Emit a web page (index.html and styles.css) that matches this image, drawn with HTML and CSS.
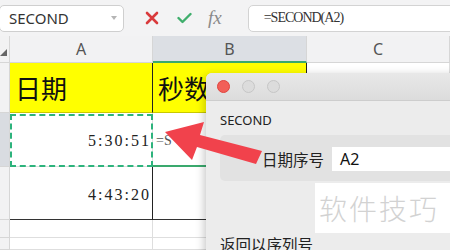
FILE: index.html
```html
<!DOCTYPE html>
<html lang="zh-CN">
<head>
  <meta charset="UTF-8" />
  <title>SECOND</title>
  <link rel="stylesheet" href="styles.css">
</head>
<body>
  <div class="app">
    <div class="toolbar">
      <div class="namebox">
        <span>SECOND</span>
        <span class="caret"></span>
      </div>
      <svg class="tool-icon" width="14" height="14" viewBox="0 0 14 14">
        <path d="M2 2 L12 12 M12 2 L2 12" stroke="#d93a3c" stroke-width="2.6" stroke-linecap="round"/>
      </svg>
      <svg class="tool-icon" width="15" height="12" viewBox="0 0 15 12">
        <path d="M1.5 6 L5.5 10 L13.5 2" fill="none" stroke="#3fae6c" stroke-width="2.4" stroke-linecap="round" stroke-linejoin="round"/>
      </svg>
      <span class="fx">fx</span>
      <div class="formula">=SECOND(A2)</div>
    </div>

    <div class="sheet">
      <div class="corner"><span class="tri"></span></div>
      <div class="colhead">A</div>
      <div class="colhead active">B</div>
      <div class="colhead">C</div>

      <div class="rowhead"></div>
      <div class="cell title bl">日期</div>
      <div class="cell title bl br top-green">秒数</div>
      <div class="cell"></div>

      <div class="rowhead active"></div>
      <div class="cell num ref">5:30:51</div>
      <div class="cell edit">=S</div>
      <div class="cell"></div>

      <div class="rowhead"></div>
      <div class="cell num bl bb">4:43:20</div>
      <div class="cell bl bb"></div>
      <div class="cell"></div>

      <div class="rowhead"></div>
      <div class="cell"></div>
      <div class="cell"></div>
      <div class="cell"></div>

      <div class="rowhead"></div>
      <div class="cell"></div>
      <div class="cell"></div>
      <div class="cell"></div>
    </div>

    <div class="dialog">
      <div class="titlebar">
        <span class="light red"></span>
        <span class="light"></span>
        <span class="light"></span>
      </div>
      <div class="dialog-body">
        <div class="fn-name">SECOND</div>
        <div class="group">
          <span class="arg-label">日期序号</span>
          <div class="arg-input">A2</div>
        </div>
        <div class="desc">返回以序列号</div>
      </div>
    </div>

    <div class="watermark">软件技巧</div>

    <svg class="arrow" width="450" height="250" viewBox="0 0 450 250">
      <polygon points="165,132 204,122 200,135 262,151 256,164 197,147 192,160" fill="#f1424c"/>
    </svg>
  </div>
</body>
</html>
```

FILE: styles.css
```css
* {
  box-sizing: border-box;
}
body {
  margin: 0;
  font-family: "Noto Sans", "Noto Sans CJK SC", sans-serif;
  background: #fff;
}
.app {
  position: relative;
  width: 450px;
  height: 250px;
  overflow: hidden;
}

/* formula bar */
.toolbar {
  height: 36px;
  display: flex;
  align-items: center;
  background: #f3f3f4;
}
.namebox {
  width: 125px;
  height: 27px;
  margin-left: -1px;
  display: flex;
  align-items: center;
  justify-content: space-between;
  padding: 0 6px 0 9px;
  background: #fff;
  border: 1px solid #cfcfcf;
  border-radius: 5px;
  font-size: 15px;
  color: #333;
}
.caret {
  width: 0;
  height: 0;
  border-left: 3px solid transparent;
  border-right: 3px solid transparent;
  border-top: 4px solid #b5b5b5;
}
.tool-icon {
  margin-left: 21px;
}
.tool-icon + .tool-icon {
  margin-left: 18px;
}
.fx {
  margin-left: 16px;
  font-family: "Liberation Serif", serif;
  font-style: italic;
  font-size: 19px;
  color: #8a8a8a;
}
.formula {
  flex: 1;
  height: 27px;
  margin-left: 26px;
  margin-right: -8px;
  padding-left: 15px;
  display: flex;
  align-items: center;
  background: #fff;
  border: 1px solid #d3d3d3;
  border-radius: 5px;
  font-family: "Liberation Serif", serif;
  font-size: 14px;
  letter-spacing: -1px;
  color: #333;
}

/* grid */
.sheet {
  display: grid;
  grid-template-columns: 10px 143px 154px 1fr;
  grid-template-rows: 27px 50px 54px 53px 18px 1fr;
  height: 214px;
}
.corner,
.rowhead {
  background: #f2f2f3;
  border-right: 1px solid #d6d6d6;
  border-bottom: 1px solid #d6d6d6;
}
.corner {
  position: relative;
}
.tri {
  position: absolute;
  right: 2px;
  bottom: 6px;
  width: 0;
  height: 0;
  border-left: 7px solid transparent;
  border-bottom: 7px solid #666;
}
.rowhead.active {
  background: #d9dce1;
}
.colhead {
  display: flex;
  align-items: center;
  justify-content: center;
  background: #f2f2f3;
  border-right: 1px solid #d6d6d6;
  border-bottom: 1px solid #d6d6d6;
  font-size: 16px;
  color: #555;
}
.colhead.active {
  background: #dcdfe4;
  border-bottom: 2px solid #3aa96d;
}
.cell {
  position: relative;
  border-right: 1px solid #dedede;
  border-bottom: 1px solid #dedede;
}
.cell.title {
  display: flex;
  align-items: center;
  padding-left: 5px;
  background: #ffff00;
  font-family: "Noto Sans CJK SC", sans-serif;
  font-size: 26px;
  color: #111;
  border-bottom-color: #c9c900;
}
.cell.bl {
  border-right: 1px solid #222;
}
.cell.bb {
  border-bottom: 1px solid #333;
}
.cell.num {
  display: flex;
  align-items: center;
  justify-content: flex-end;
  padding-right: 1px;
  padding-top: 3px;
  font-family: "Liberation Serif", serif;
  font-size: 16px;
  letter-spacing: 2px;
  color: #222;
}
.cell.ref::after {
  content: "";
  position: absolute;
  inset: 1px -1px -1px 0;
  border: 2px dashed #2db37c;
}
.cell.edit {
  display: flex;
  align-items: center;
  padding-left: 3px;
  padding-top: 3px;
  border-bottom: 2px solid #3aa96d;
  font-family: "Liberation Serif", serif;
  font-size: 14px;
  color: #555;
}

/* function dialog */
.dialog {
  position: absolute;
  left: 206px;
  top: 73px;
  width: 260px;
  height: 190px;
  background: #ececec;
  border-radius: 6px 0 0 0;
  box-shadow: -2px 2px 8px rgba(0, 0, 0, 0.22);
}
.titlebar {
  height: 28px;
  display: flex;
  align-items: center;
  gap: 12px;
  padding-left: 11px;
  background: linear-gradient(#e8e8e8, #dcdcdc);
  border-bottom: 1px solid #cdcdcd;
  border-radius: 6px 0 0 0;
}
.light {
  width: 13px;
  height: 13px;
  border-radius: 50%;
  background: #dcdcdc;
  border: 1px solid #c6c6c6;
}
.light.red {
  background: #f25f58;
  border-color: #e0443e;
}
.dialog-body {
  padding: 10px 0 0 14px;
}
.fn-name {
  font-size: 13px;
  color: #222;
  height: 24px;
}
.group {
  height: 46px;
  display: flex;
  align-items: center;
  padding-left: 42px;
  padding-top: 2px;
  background: #e2e2e2;
  border-radius: 5px 0 0 5px;
}
.arg-label {
  font-family: "Noto Sans CJK SC", sans-serif;
  font-size: 15.5px;
  color: #222;
}
.arg-input {
  flex: 1;
  height: 24px;
  margin-left: 8px;
  padding-left: 8px;
  display: flex;
  align-items: center;
  background: #fff;
  font-size: 16px;
  color: #111;
}
.desc {
  margin-top: 52px;
  font-family: "Noto Sans CJK SC", sans-serif;
  font-size: 15.5px;
  color: #222;
}

.watermark {
  position: absolute;
  left: 315px;
  top: 183px;
  width: 140px;
  height: 50px;
  padding-left: 4px;
  display: flex;
  align-items: center;
  background: #fff;
  font-family: "Noto Sans CJK SC", sans-serif;
  font-weight: 300;
  font-size: 28px;
  letter-spacing: 2px;
  color: #d2d2d2;
}
.arrow {
  position: absolute;
  left: 0;
  top: 0;
  pointer-events: none;
}
```
